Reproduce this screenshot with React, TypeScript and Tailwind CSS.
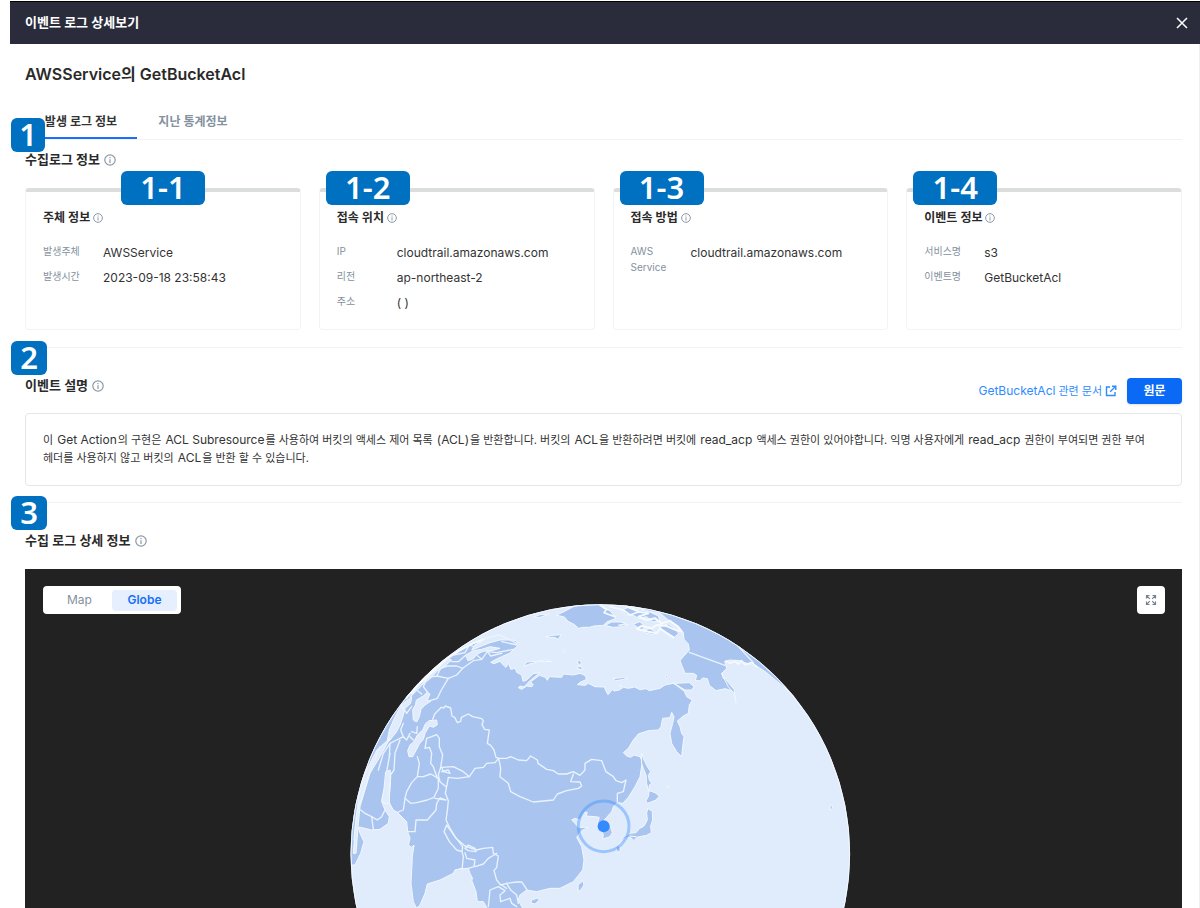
import { useState } from 'react';
import type { ReactNode } from 'react';

function InfoIcon({ className }: { className: string }) {
  return (
    <svg viewBox="0 0 12 12" className={className} fill="none" stroke="#8b98a5" aria-hidden="true">
      <circle cx="6" cy="6" r="5.2" strokeWidth="1.2" />
      <path d="M6 5.2V9M6 3v1.2" strokeWidth="1.2" />
    </svg>
  );
}

function Badge({ children, className }: { children: ReactNode; className: string }) {
  return (
    <span
      className={`absolute z-10 flex h-[34px] items-center justify-center rounded-md bg-[#0070c0] pb-0.5 font-['Noto_Sans',sans-serif] text-[31px] leading-none font-semibold text-white ${className}`}
    >
      {children}
    </span>
  );
}

function SectionTitle({ children }: { children: ReactNode }) {
  return (
    <h2 className="flex h-5 items-center gap-1 text-[13px] font-semibold text-[#2a2a2a]">
      {children}
      <InfoIcon className="size-3" />
    </h2>
  );
}

const description =
  '이 Get Action의 구현은 ACL Subresource를 사용하여 버킷의 액세스 제어 목록 (ACL)을 반환합니다. 버킷의 ACL을 반환하려면 버킷에 read_acp 액세스 권한이 있어야합니다. 익명 사용자에게 read_acp 권한이 부여되면 권한 부여 헤더를 사용하지 않고 버킷의 ACL을 반환 할 수 있습니다.';

/* Latin words are set larger than the Hangul around them. */
function MixedText({ text }: { text: string }) {
  return text.split(/([A-Za-z_()]+(?: [A-Za-z_()]+)*)/).map((part, i) => (
    <span key={i} className={i % 2 ? 'mx-px text-[12px] leading-none' : 'text-[11px] leading-none'}>
      {part}
    </span>
  ));
}

type CardData = {
  title: string;
  badge: string;
  badgeClass: string;
  rows: [string, string][];
};

const cards: CardData[] = [
  {
    title: '주체 정보',
    badge: '1-1',
    badgeClass: 'left-[95px]',
    rows: [
      ['발생주체', 'AWSService'],
      ['발생시간', '2023-09-18 23:58:43'],
    ],
  },
  {
    title: '접속 위치',
    badge: '1-2',
    badgeClass: 'left-1.5',
    rows: [
      ['IP', 'cloudtrail.amazonaws.com'],
      ['리전', 'ap-northeast-2'],
      ['주소', '( )'],
    ],
  },
  {
    title: '접속 방법',
    badge: '1-3',
    badgeClass: 'left-1.5',
    rows: [['AWS Service', 'cloudtrail.amazonaws.com']],
  },
  {
    title: '이벤트 정보',
    badge: '1-4',
    badgeClass: 'left-1.5',
    rows: [
      ['서비스명', 's3'],
      ['이벤트명', 'GetBucketAcl'],
    ],
  },
];

function InfoCard({ card }: { card: CardData }) {
  return (
    <article className="relative min-h-[142px] rounded border border-t-4 border-[#f3f4f5] border-t-[#dcdddd] px-[17px] pt-4 pb-3">
      <Badge className={`-top-[21px] w-[84px] ${card.badgeClass}`}>{card.badge}</Badge>
      <h3 className="flex h-5 items-center gap-[3px] text-[12px] font-semibold text-[#2a2a2a]">
        {card.title}
        <InfoIcon className="size-[10px]" />
      </h3>
      <dl className="mt-[15px] flex flex-col gap-[5px]">
        {card.rows.map(([label, value]) => (
          <div key={label} className="flex h-5 items-start">
            <dt className="w-[60px] shrink-0 pr-3 text-[10px] leading-4 text-[#84919e]">{label}</dt>
            <dd className="text-[12px] leading-5 text-[#333]">{value}</dd>
          </div>
        ))}
      </dl>
    </article>
  );
}

function Globe() {
  return (
    <svg viewBox="30 39 1521 915" className="block h-[305px] w-[507px]" role="img" aria-label="Globe">
      <defs>
        <clipPath id="sphere">
          <circle cx="781" cy="792" r="749" />
        </clipPath>
      </defs>
      <circle cx="781" cy="792" r="749" fill="#e0ecfb" />
      <g clipPath="url(#sphere)" strokeLinejoin="round" strokeLinecap="round">
        <g fill="#a9c5ef" stroke="#f1f7fe" strokeWidth="3">
          {/* Eurasia */}
          <path d="M0 830 L35 825 45 825 62 790 72 755 60 730 55 712 L62 712 95 720 120 718 145 700 148 680 135 660 125 635 138 580 145 545 152 560 150 600 146 630 150 642 160 660 172 667 200 695 203 725 210 745 205 765 215 772 222 765 217 800 213 880 220 935 230 955 240 945 255 910 262 882 300 870 340 850 345 840 360 836 385 835 390 850 398 866 395 870 408 905 412 935 430 935 450 970 560 970 545 950 535 930 540 915 560 900 590 905 630 895 660 895 700 875 728 840 732 810 725 770 710 742 725 722 745 712 715 712 705 700 695 690 705 685 720 690 735 665 742 668 738 678 765 680 778 682 772 700 778 712 790 733 788 747 810 740 817 728 810 705 792 690 800 682 815 665 820 650 832 638 848 640 865 622 885 590 900 560 907 515 900 500 882 495 872 502 860 498 850 488 865 475 880 450 895 432 925 422 955 420 963 410 968 385 990 383 995 367 1002 380 998 400 990 430 995 460 1010 485 1025 500 1028 470 1032 440 1025 430 1020 410 1012 393 1030 378 1045 370 1048 345 1057 330 1040 320 1032 302 1010 285 1000 280 975 285 960 295 928 302 918 296 900 299 884 291 865 295 850 292 838 300 822 303 818 298 804 314 798 303 793 291 765 290 745 280 735 286 712 284 720 277 740 268 735 256 720 250 700 255 670 252 665 262 628 260 622 271 616 262 598 256 585 266 572 275 580 285 575 290 560 288 545 298 535 293 540 288 552 291 560 282 572 270 600 248 580 251 560 270 549 274 545 255 530 247 526 235 512 238 506 220 498 232 490 225 480 214 462 221 452 217 470 207 485 200 508 190 528 172 536 164 528 152 505 148 475 140 440 150 400 160 330 200 230 290 0 500Z" />
          {/* Arctic islands and Greenland */}
          <path d="M650 75 670 66 700 50 730 42 780 38 790 55 810 62 828 85 800 96 790 106 762 108 748 112 728 112 716 115 702 103 684 94 674 82Z" />
          <path d="M618 140 640 136 663 134 655 148 642 142 630 143ZM583 80 600 74 628 72 600 82ZM668 180 675 180 674 188ZM712 215 718 211 724 218 720 226ZM715 230 726 230 726 240 712 235ZM820 266 850 262 862 266 828 272ZM978 256 983 258 980 264 976 262ZM840 285 845 286 842 290Z" />
          <path d="M552 228 560 216 590 214 615 210 636 215 600 214 568 222Z" />
          <path d="M796 106 815 96 840 96 858 100 835 106 865 104 850 110 820 112ZM846 60 865 52 900 60 930 66 955 78 960 95 938 95 920 80 895 85 880 76 860 74ZM880 102 900 95 915 110 905 120ZM960 110 985 102 1000 112 1016 130 1003 142 980 130ZM910 120 930 116 950 128 940 134 920 130Z" />
          {/* North America */}
          <path d="M850 45 890 52 920 62 960 70 985 90 1015 108 1030 128 1032 148 1045 162 1048 180 1030 200 1020 212 1027 230 1035 250 1060 250 1070 256 1066 272 1080 272 1088 264 1102 266 1108 286 1128 302 1155 296 1175 302 1170 285 1150 265 1145 250 1160 236 1158 228 1154 214 1170 210 1200 212 1225 222 1250 228 1280 248 1330 290 1450 400 1300 100 1000 0Z" />
          <path d="M1003 280 1048 278 1062 290 1055 300 1036 300Z" />
          <path d="M1145 250 1165 278 1182 298 1188 340 1182 310 1165 290Z" />
          {/* Japan, Sakhalin, Taiwan, Hainan */}
          <path d="M905 490 912 510 922 530 932 545 925 556 928 570 935 580 928 585 926 605 920 580 918 555 910 535 905 520Z" />
          <path d="M928 602 945 608 958 618 948 630 935 635 922 640 918 632 925 620Z" />
          <path d="M924 656 937 664 938 690 932 708 934 728 920 736 890 742 882 752 872 742 862 742 848 750 838 765 842 780 832 788 828 772 840 758 850 742 870 730 888 728 898 716 912 708 922 690 920 670Z" />
          <path d="M715 885 728 872 732 885 722 900 715 904ZM575 930 592 924 598 930 585 942 574 940Z" />
          <path d="M980 590 986 588 982 592ZM1470 648 1475 645 1478 656 1472 658Z" />
        </g>
        {/* Inland waters */}
        <g fill="#e0ecfb" stroke="#f1f7fe" strokeWidth="3">
          <path d="M268 392 290 390 292 404 280 412 268 408 255 430 250 448 238 462 230 478 218 500 207 500 203 482 210 465 222 455 232 435 248 420 256 402Z" />
          <path d="M230 330 250 318 262 306 270 312 262 330 272 334 255 345 243 358 238 380 230 396 220 390 218 360 226 345Z" />
          <path d="M202 330 215 320 212 340 195 355 188 382 180 405 170 425 150 450 140 460 148 420 165 380 185 345Z" />
          <path d="M378 195 400 182 425 178 450 170 480 175 455 182 430 184 412 192 400 206 385 212Z" />
          <path d="M270 250 300 225 325 205 335 210 310 232 295 240 268 268 245 285Z" />
          <path d="M415 160 440 144 478 134 510 150 480 150 450 158 425 168 395 180 405 165Z" />
          <path d="M56 620 75 550 110 480 150 445 120 500 90 550 72 610 60 650 55 700 48 790 40 790 46 710Z" />
          <path d="M138 545 150 540 152 560 148 595 148 640 135 640 125 632 132 595Z" />
        </g>
        {/* Borders */}
        <g fill="none" stroke="#eaf3fe" strokeWidth="4">
          <path d="M270 332 292 325 304 300 325 265 350 255 368 235 400 212 425 208 442 185 470 188 520 178" />
          <path d="M278 388 284 372 296 360 304 352 312 354 315 348 332 354 336 378 344 382 352 398 362 394 364 382 385 372 398 380 425 386 430 392 426 404 434 418 448 420 442 460 452 466 462 480 468 502 476 505 500 505 512 500 535 510 560 512 572 498 592 510 594 520 620 538 640 542 655 552 680 552 700 545 720 556 735 540 735 520 755 508 785 512 798 545 820 560 828 572 845 578 858 570 850 605 832 610 832 636" />
          <path d="M476 505 482 535 480 560 505 580 512 605 540 620 580 636 640 630 652 612 680 602 715 595 725 588 720 576 692 575 700 552" />
          <path d="M476 505 465 518 440 520 430 532 405 535 388 560 352 565 325 562 320 590 316 610 325 632 322 662 318 690 330 715 348 745 375 768 410 780 430 775 458 772 460 790 475 798 470 832 462 842 470 870 482 885 500 880 530 876 545 876 555 890 562 902" />
          <path d="M388 560 370 545 340 530 305 532 310 545 330 550 325 540 305 545M292 565 280 530 272 520 275 490 268 472 255 475 260 445 275 440 290 434 298 445 298 470 308 495 302 532 295 555 300 575 318 590" />
          <path d="M232 560 250 560 272 552 295 565 295 595 282 622 262 630 230 638 212 640 195 625 200 605 215 578 232 560 238 520 232 500" />
          <path d="M195 625 190 660 172 667M285 625 318 630 300 624 290 640 288 660 262 690 228 690 225 725 203 725" />
          <path d="M320 705 345 740 368 770 366 785 350 780 328 755 312 725 320 705M375 775 385 765 405 775 408 785 385 782 375 775M366 785 370 800 366 840M375 788 380 805 405 810 402 830 385 835M405 830 430 822 445 805 462 795 470 790" />
          <path d="M445 950 450 900 475 890 495 902 480 915 482 935 510 925 515 940 530 950M500 880 512 900 530 915 535 940M485 885 500 895" />
          <path d="M185 345 200 370 215 350M190 400 182 420 190 440 200 450 210 430M190 440 170 450 150 460 130 490 115 540M150 460 148 500M180 450 165 490 162 540 148 560M215 425 230 430 232 410M210 440 220 450" />
          <path d="M150 490 140 545M75 670 95 680 112 690 125 680 135 660M95 680 100 718M62 660 75 670M120 470 90 540 68 610 50 670 42 750" />
          <path d="M210 320 240 290 262 262 290 258 325 265M262 262 250 290 262 306M290 258 302 235 322 228 350 228 368 235M230 300 245 312M325 205 340 195 375 188 388 165 400 170M335 215 355 215 378 195M360 180 385 165 430 148M425 208 410 195M442 185 452 198 485 190" />
          <path d="M480 135 530 160M485 155 532 165M1000 278 1032 302M1048 187 1155 226M1195 170 1240 218" />
        </g>
        {/* Crowded coastlines near the limb */}
        <g fill="none" stroke="#f6faff" strokeWidth="5" strokeLinejoin="round">
          <path d="M200 325 225 290 262 255 300 215 340 182 400 142 455 118" />
          <path d="M215 310 245 275 285 240 320 205 360 180 400 160 430 148" />
          <path d="M780 46 800 58 792 68 825 80M810 50 850 60 870 75 895 66" />
          <path d="M860 50 900 66 925 70 895 80 920 90 945 85 965 100 990 92 1015 112 1025 125 1002 118 980 108 950 105 935 115 905 108 890 116 925 125 950 130 960 116 1000 142" strokeWidth="6" />
          <path d="M1158 214 1170 220 1185 214 1195 222 1205 212 1215 224 1235 218 1250 230" />
          <path d="M870 738 888 740M835 768 860 752" strokeWidth="3" />
        </g>
      </g>
      <circle cx="781" cy="792" r="748" fill="none" stroke="#f6faff" strokeWidth="3" />
      <circle cx="791" cy="709" r="76" fill="none" stroke="#348bff" strokeOpacity="0.4" strokeWidth="9" />
      <circle cx="791" cy="709" r="18" fill="#348bff" />
    </svg>
  );
}

export default function App() {
  const [view, setView] = useState('Globe');
  const [tab, setTab] = useState(0);

  return (
    <div className="flex h-screen min-h-[700px] flex-col overflow-hidden bg-white pl-2.5 font-['Inter','Noto_Sans_CJK_KR',sans-serif] text-[#2a2a2a]">
      <header className="mt-px flex h-[43px] shrink-0 items-center justify-between border-t border-black bg-[#2a2c3b] pr-3 pl-[15px] text-white">
        <h1 className="text-[13px] font-semibold">이벤트 로그 상세보기</h1>
        <button type="button" aria-label="닫기" className="flex size-3 items-center justify-center">
          <svg viewBox="0 0 12 12" className="size-3" stroke="currentColor" strokeWidth="1.5" aria-hidden="true">
            <path d="M1 1l10 10M11 1L1 11" />
          </svg>
        </button>
      </header>

      <main className="flex min-h-0 flex-1 flex-col border-r border-[#eeeeef] pr-[17px] pl-[15px]">
        <p className="mt-[18px] flex h-6 shrink-0 items-center text-[16px] font-semibold">AWSService의 GetBucketAcl</p>

        <div className="relative mt-[17px] shrink-0">
          <nav className="flex h-[37px] border-b border-[#f1f2f3]">
            {['발생 로그 정보', '지난 통계정보'].map((name, i) => (
              <button
                key={name}
                type="button"
                onClick={() => setTab(i)}
                className={`w-28 border-b-2 pt-[3px] text-[12px] font-semibold ${
                  tab === i ? 'border-[#1a6dff] text-[#333]' : 'border-transparent text-[#84919e]'
                }`}
              >
                {name}
              </button>
            ))}
          </nav>
          <Badge className="top-[15px] -left-[14px] w-[34px]">1</Badge>
        </div>

        <section className="mt-[10px] shrink-0">
          <SectionTitle>수집로그 정보</SectionTitle>
          <div className="mt-[18px] grid grid-cols-4 gap-[18px]">
            {cards.map((card) => (
              <InfoCard key={card.title} card={card} />
            ))}
          </div>
        </section>

        <section className="relative mt-[17px] shrink-0 border-t border-[#f1f2f3] pt-[30px]">
          <Badge className="-top-[7px] -left-[14px] w-[36px]">2</Badge>
          <div className="flex items-start justify-between">
            <div className="-mt-0.5">
              <SectionTitle>이벤트 설명</SectionTitle>
            </div>
            <div className="flex items-center gap-2.5">
              <a href="#docs" className="flex items-center gap-[3px] text-[#2f8bff]">
                <span className="text-[12px]">GetBucketAcl</span>
                <span className="text-[11px]">관련 문서</span>
                <svg viewBox="0 0 12 12" className="size-3" fill="none" stroke="currentColor" strokeWidth="1.4" aria-hidden="true">
                  <path d="M5 2H1.5v8.5H10V7M7 1.2h3.8V5M10.5 1.5L5.2 6.8" />
                </svg>
              </a>
              <button type="button" className="h-[26px] w-[55px] rounded bg-[#0a69f5] text-[12px] font-bold text-white shadow-sm">
                원문
              </button>
            </div>
          </div>
          <p className="mt-[9px] min-h-[73px] rounded border border-[#e5e6e8] px-[17px] py-[17px] text-[11px] leading-[18px] break-keep text-[#333]">
            <MixedText text={description} />
          </p>
        </section>

        <section className="relative mt-4 flex min-h-0 flex-1 flex-col border-t border-[#f1f2f3] pt-7">
          <Badge className="-top-[7px] -left-[14px] w-[36px]">3</Badge>
          <SectionTitle>수집 로그 상세 정보</SectionTitle>
          <div className="relative mt-[18px] flex min-h-0 flex-1 items-start justify-center overflow-hidden bg-[#222] pt-[34px]">
            <Globe />
            <div className="absolute top-[17px] left-[18px] flex h-7 w-[138px] items-center rounded bg-white p-1 text-[12px]">
              {['Map', 'Globe'].map((name) => (
                <button
                  key={name}
                  type="button"
                  onClick={() => setView(name)}
                  className={`h-[21px] flex-1 rounded-sm ${
                    view === name ? 'bg-[#e5effd] font-semibold text-[#1670f7]' : 'text-[#84919e]'
                  }`}
                >
                  {name}
                </button>
              ))}
            </div>
            <button
              type="button"
              aria-label="전체 화면"
              className="absolute top-[17px] right-[17px] flex size-7 items-center justify-center rounded bg-white text-[#75828f]"
            >
              <svg viewBox="0 0 12 12" className="size-3" fill="none" stroke="currentColor" strokeWidth="1.2" aria-hidden="true">
                <path d="M1.5 4.5v-3h3M7.5 1.5h3v3M10.5 7.5v3h-3M4.5 10.5h-3v-3M1.5 1.5l3.3 3.3M10.5 1.5L7.2 4.8M10.5 10.5L7.2 7.2M1.5 10.5l3.3-3.3" />
              </svg>
            </button>
          </div>
        </section>
      </main>
    </div>
  );
}
